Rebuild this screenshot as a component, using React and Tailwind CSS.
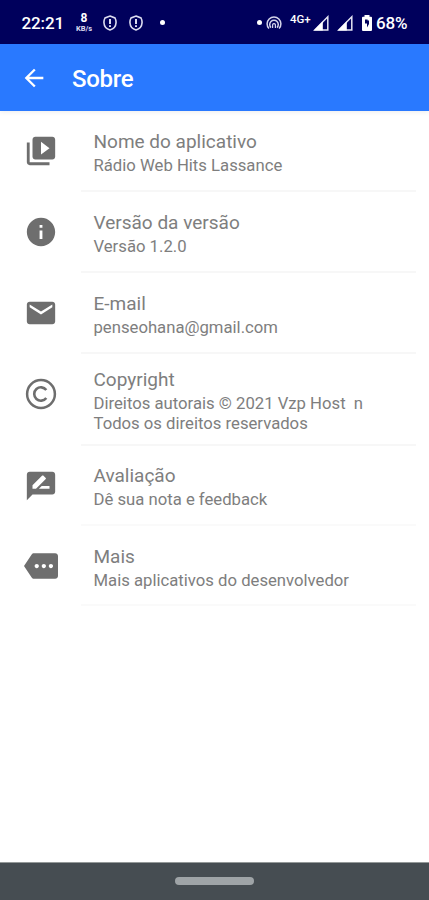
import React from 'react'
import { MdArrowBack, MdVideoLibrary, MdInfo, MdEmail, MdRateReview, MdMore } from 'react-icons/md'

const items = [
  { icon: MdVideoLibrary, title: 'Nome do aplicativo', lines: ['Rádio Web Hits Lassance'], row: 'h-[80.5px] pt-[20px]', border: 'border-[#f7f7f7]' },
  { icon: MdInfo, title: 'Versão da versão', lines: ['Versão 1.2.0'], row: 'h-[81px] pt-[20px]', border: 'border-[#f7f7f7]' },
  { icon: MdEmail, title: 'E-mail', lines: ['penseohana@gmail.com'], row: 'h-[81px] pt-[20px]', border: 'border-[#f7f7f7]' },
  { icon: Copyright, title: 'Copyright', lines: ['Direitos autorais © 2021 Vzp Host  n', 'Todos os direitos reservados'], row: 'h-[92px] pt-[15.5px]', border: 'border-[#f7f7f7]' },
  { icon: MdRateReview, title: 'Avaliação', lines: ['Dê sua nota e feedback'], row: 'h-[80.5px] pt-[19px]', border: 'border-[#fafafa]' },
  { icon: MdMore, title: 'Mais', lines: ['Mais aplicativos do desenvolvedor'], row: 'h-[80px] pt-[19.5px]', border: 'border-[#fafafa]' },
]

function Copyright({ className, size }){
  return (
    <svg className={className} width={size} height={size} viewBox="0 0 34 34" fill="none" stroke="currentColor">
      <circle cx="17" cy="17" r="13.9" strokeWidth="2.5"/>
      <path d="M22.3 13 A6.7 6.7 0 1 0 22.3 21" strokeWidth="2.6"/>
    </svg>
  )
}

function Shield({ className }){
  return (
    <svg className={className} width="14" height="16" viewBox="0 0 14 16" fill="none" stroke="#dcdcf0" strokeWidth="1.6">
      <path d="M7 1 L12 3 Q13.3 5.5 13 8 C12.8 11.5 10.5 14 7 15 C3.5 14 1.2 11.5 1 8 Q0.7 5.5 2 3 Z"/>
      <path d="M7 4 V9 M7 10.2 V12" strokeWidth="2"/>
    </svg>
  )
}

function Hotspot(){
  return (
    <svg className="ml-[4px] -mt-px" width="16" height="15" viewBox="0 0 16 15" fill="none" stroke="#d4d4ea" strokeWidth="1.5">
      <path d="M3 13.6 A6.9 6.9 0 1 1 13 13.6"/>
      <path d="M5 12.6 A4.3 4.3 0 1 1 11 12.6"/>
      <path d="M6.6 13 V9.6 A1.5 1.5 0 0 1 9.4 9.6 V13" strokeWidth="1.2"/>
    </svg>
  )
}

function Signal({ className }){
  return (
    <svg className={className} width="16" height="16" viewBox="0 0 16 16">
      <path d="M14.8 1.8 V15 H1.8 Z" fill="none" stroke="#e4e4f2" strokeWidth="1.5"/>
      <path d="M9.8 6.2 V15.6 H0.8 Z" fill="#fff"/>
    </svg>
  )
}

function Battery(){
  return (
    <svg className="ml-[9px]" width="10" height="16" viewBox="0 0 10 16">
      <path d="M2.5 0 H7.5 V1.8 H9 Q10 1.8 10 2.8 V15 Q10 16 9 16 H1 Q0 16 0 15 V2.8 Q0 1.8 1 1.8 H2.5 Z" fill="#fff"/>
      <path d="M3 4.5 V8.5 H5 V12.5 L7 9 V5.5 H5.6 V4.5 Z" fill="#00005c"/>
    </svg>
  )
}

function StatusBar(){
  return (
    <div className="h-[44px] bg-[#00005c] flex items-center pt-px pl-[21.5px] pr-[21px] text-white">
      <span className="w-[42px] text-[17px] font-medium tracking-[-0.1px] leading-[20px] whitespace-nowrap">22:21</span>
      <span className="ml-[12px] w-[17px] flex flex-col items-center">
        <span className="text-[12px] font-bold leading-[13px]">8</span>
        <span className="text-[7.5px] font-bold leading-[9px] -mt-px tracking-[-0.1px] text-[#dcdcf0]">KB/s</span>
      </span>
      <Shield className="ml-[10px]"/>
      <Shield className="ml-[12px]"/>
      <span className="ml-[17px] w-[5px] h-[5px] rounded-full bg-white"/>
      <span className="ml-auto w-[5px] h-[5px] rounded-full bg-white"/>
      <Hotspot/>
      <span className="ml-[8px] w-[22px] text-[11.5px] font-medium leading-[12px] -mt-[8px] whitespace-nowrap">4G+</span>
      <Signal className="ml-[1px]"/>
      <Signal className="ml-[8px]"/>
      <Battery/>
      <span className="ml-[4px] w-[32px] text-[17px] font-medium tracking-[-0.1px] leading-[20px] whitespace-nowrap">68%</span>
    </div>
  )
}

export default function App(){
  return (
    <div className="w-[429px] h-[900px] bg-white flex flex-col overflow-hidden font-['Roboto',sans-serif]">
      <StatusBar/>
      <header className="h-[67px] bg-[#2979ff] flex items-center pl-[20px] text-white shadow-[0_1px_5px_rgba(0,0,0,0.08)]">
        <MdArrowBack size={28}/>
        <h1 className="ml-[24px] mt-[2px] text-[24px] font-medium leading-[28px] tracking-[-0.3px]">Sobre</h1>
      </header>
      <main className="flex-1">
        {items.map(it=> (
          <div key={it.title} className="flex pl-[24px] pr-[13px]">
            <it.icon className="mt-[23px] shrink-0 text-[#6e6e6e]" size={34}/>
            <div className={'ml-[23px] pl-[12.5px] flex-1 border-b-2 text-[#7e7e7e] ' + it.row + ' ' + it.border}>
              <div className="text-[19px] leading-[22px]">{it.title}</div>
              <div className="mt-[3px] text-[16.7px] leading-[19.5px]">
                {it.lines.map(l=> <div key={l} className="whitespace-pre">{l}</div>)}
              </div>
            </div>
          </div>
        ))}
      </main>
      <footer className="h-[38px] bg-[#464d52] border-t border-[#949999] flex justify-center pt-[14px]">
        <div className="w-[79px] h-[8px] rounded-full bg-[#9fa4a7]"/>
      </footer>
    </div>
  )
}
